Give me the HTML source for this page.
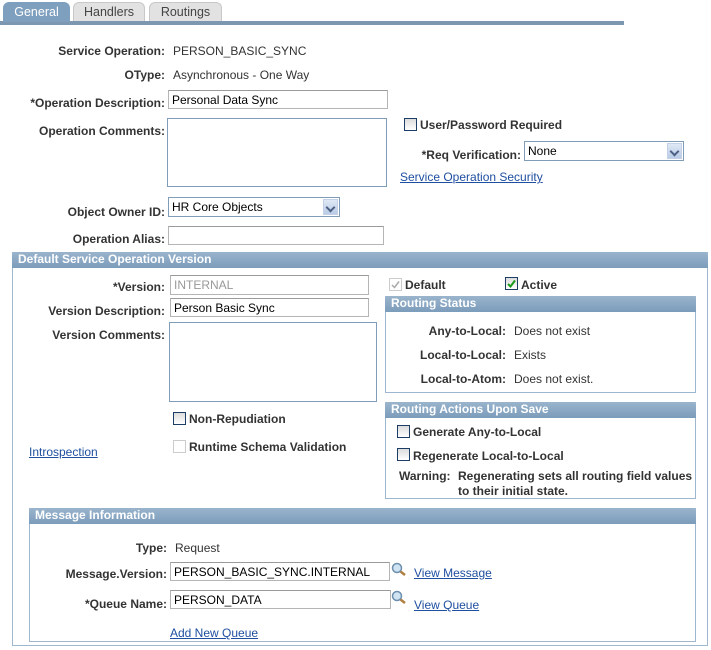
<!DOCTYPE html>
<html><head><meta charset="utf-8"><style>
*{margin:0;padding:0;box-sizing:border-box}
body{width:711px;height:650px;background:#fff;font-family:"Liberation Sans",Arial,sans-serif;font-size:12px;color:#333;position:relative;overflow:hidden}
.a{position:absolute;white-space:nowrap;line-height:14px}
.l{position:absolute;white-space:nowrap;line-height:14px;font-weight:bold;color:#333;text-align:right}
.in{position:absolute;border:1px solid #b5b5b5;border-top-color:#9a9a9a;background:#fff;padding:2px 3px 0;line-height:14px;color:#000}
.ta{position:absolute;border:1px solid #7f9db9;background:#fff}
.lk{position:absolute;white-space:nowrap;color:#1f4fa0;text-decoration:underline;line-height:14px}
.cb{position:absolute;width:13px;height:13px;border:1px solid #1c3d66;background:linear-gradient(#dcdcdc,#fff)}
.hd{position:absolute;background:linear-gradient(#9ab4cc,#7b9cbb);color:#fff;font-weight:bold;line-height:15px;padding-left:6px;border-radius:4px 4px 0 0}
.bx{position:absolute;border:1px solid #9eb6ce}
.sel{position:absolute;border:1px solid #7f9db9;background:#fff;padding:2px 3px 0;line-height:15px;color:#000}
.sel i{position:absolute;right:1px;top:1px;width:15px;height:16px;background:linear-gradient(#dfe8f5,#b9cbe6);border:1px solid #c4d2e8}
.sel i:after{content:"";position:absolute;left:3px;top:4px;width:5px;height:5px;border-right:2px solid #4d6185;border-bottom:2px solid #4d6185;transform:rotate(45deg)}
.mg{position:absolute;width:16px;height:16px}
</style></head><body>
<div style="position:absolute;left:0;top:21px;width:624px;height:4px;background:#7d97b0"></div>
<div style="position:absolute;left:3px;top:2px;width:67px;height:20px;background:#7e9fbe;border-radius:6px 6px 0 0;color:#fff;text-align:center;line-height:20px;font-size:12.5px">General</div>
<div style="position:absolute;left:73px;top:2px;width:72px;height:19px;background:#e2e2e2;border:1px solid #c8c8c8;border-bottom:none;border-radius:6px 6px 0 0;color:#444;text-align:center;line-height:19px;font-size:12.5px">Handlers</div>
<div style="position:absolute;left:149px;top:2px;width:73px;height:19px;background:#e2e2e2;border:1px solid #c8c8c8;border-bottom:none;border-radius:6px 6px 0 0;color:#444;text-align:center;line-height:19px;font-size:12.5px">Routings</div>

<div class="l" style="right:546px;top:44px">Service Operation:</div><div class="a" style="left:173px;top:44px">PERSON_BASIC_SYNC</div>
<div class="l" style="right:546px;top:68px">OType:</div><div class="a" style="left:173px;top:68px">Asynchronous - One Way</div>
<div class="l" style="right:546px;top:96px">*Operation Description:</div>
<div class="in" style="left:168px;top:90px;width:220px;height:19px">Personal Data Sync</div>
<div class="l" style="right:546px;top:124px">Operation Comments:</div>
<div class="ta" style="left:167px;top:118px;width:220px;height:69px"></div>
<div class="cb" style="left:404px;top:118px"></div><div class="l" style="left:420px;top:118px">User/Password Required</div>
<div class="l" style="right:190px;top:148px">*Req Verification:</div>
<div class="sel" style="left:524px;top:141px;width:160px;height:20px">None<i></i></div>
<div class="lk" style="left:400px;top:170px">Service Operation Security</div>
<div class="l" style="right:546px;top:205px">Object Owner ID:</div>
<div class="sel" style="left:168px;top:197px;width:172px;height:20px">HR Core Objects<i></i></div>
<div class="l" style="right:546px;top:232px">Operation Alias:</div>
<div class="in" style="left:168px;top:226px;width:216px;height:19px"></div>

<div class="bx" style="left:12px;top:252px;width:696px;height:394px"></div>
<div class="hd" style="left:12px;top:252px;width:696px;height:16px">Default Service Operation Version</div>
<div class="l" style="right:546px;top:280px">*Version:</div>
<div class="in" style="left:170px;top:275px;width:199px;height:20px;color:#999">INTERNAL</div>
<div class="l" style="right:546px;top:304px">Version Description:</div>
<div class="in" style="left:170px;top:298px;width:199px;height:19px">Person Basic Sync</div>
<div class="l" style="right:546px;top:328px">Version Comments:</div>
<div class="ta" style="left:169px;top:322px;width:208px;height:80px"></div>
<div class="cb" style="left:173px;top:412px"></div><div class="l" style="left:189px;top:412px">Non-Repudiation</div>
<div class="cb" style="left:173px;top:440px;border-color:#ccc;background:#fff"></div><div class="l" style="left:189px;top:440px">Runtime Schema Validation</div>
<div class="lk" style="left:29px;top:445px">Introspection</div>

<div class="cb" style="left:389px;top:278px;border-color:#ccc;background:#fff"><svg width="11" height="11" style="position:absolute;left:0;top:0"><path d="M2 6L4.5 8.5L9 2.5" stroke="#aaa" stroke-width="1.5" fill="none"/></svg></div><div class="l" style="left:405px;top:278px">Default</div>
<div class="cb" style="left:505px;top:277px"><svg width="11" height="11" style="position:absolute;left:0;top:0"><path d="M2 6L4.5 8.5L9 2.5" stroke="#1a9a1a" stroke-width="2" fill="none"/></svg></div><div class="l" style="left:521px;top:278px">Active</div>

<div class="bx" style="left:385px;top:296px;width:311px;height:97px"></div>
<div class="hd" style="left:385px;top:296px;width:311px;height:16px">Routing Status</div>
<div class="l" style="right:205px;top:324px">Any-to-Local:</div><div class="a" style="left:514px;top:324px">Does not exist</div>
<div class="l" style="right:205px;top:348px">Local-to-Local:</div><div class="a" style="left:514px;top:348px">Exists</div>
<div class="l" style="right:205px;top:372px">Local-to-Atom:</div><div class="a" style="left:514px;top:372px">Does not exist.</div>

<div class="bx" style="left:385px;top:402px;width:311px;height:97px"></div>
<div class="hd" style="left:385px;top:402px;width:311px;height:16px">Routing Actions Upon Save</div>
<div class="cb" style="left:397px;top:425px"></div><div class="l" style="left:413px;top:425px">Generate Any-to-Local</div>
<div class="cb" style="left:397px;top:448px"></div><div class="l" style="left:413px;top:449px">Regenerate Local-to-Local</div>
<div class="l" style="left:399px;top:469px">Warning:</div>
<div class="l" style="left:458px;top:469px;text-align:left;line-height:15px">Regenerating sets all routing field values<br>to their initial state.</div>

<div class="bx" style="left:29px;top:508px;width:667px;height:134px"></div>
<div class="hd" style="left:29px;top:508px;width:667px;height:16px">Message Information</div>
<div class="l" style="right:544px;top:541px">Type:</div><div class="a" style="left:175px;top:541px">Request</div>
<div class="l" style="right:544px;top:567px">Message.Version:</div>
<div class="in" style="left:170px;top:562px;width:220px;height:19px">PERSON_BASIC_SYNC.INTERNAL</div>
<svg class="mg" style="left:391px;top:562px" viewBox="0 0 16 16"><circle cx="6" cy="6" r="4.5" fill="#cfe3f3" stroke="#6d8fae" stroke-width="1.5"/><path d="M9.5 9.5L14 13" stroke="#b08040" stroke-width="2.5"/></svg>
<div class="lk" style="left:414px;top:566px">View Message</div>
<div class="l" style="right:544px;top:597px">*Queue Name:</div>
<div class="in" style="left:170px;top:590px;width:221px;height:19px">PERSON_DATA</div>
<svg class="mg" style="left:391px;top:590px" viewBox="0 0 16 16"><circle cx="6" cy="6" r="4.5" fill="#cfe3f3" stroke="#6d8fae" stroke-width="1.5"/><path d="M9.5 9.5L14 13" stroke="#b08040" stroke-width="2.5"/></svg>
<div class="lk" style="left:414px;top:598px">View Queue</div>
<div class="lk" style="left:170px;top:626px">Add New Queue</div>
</body></html>
